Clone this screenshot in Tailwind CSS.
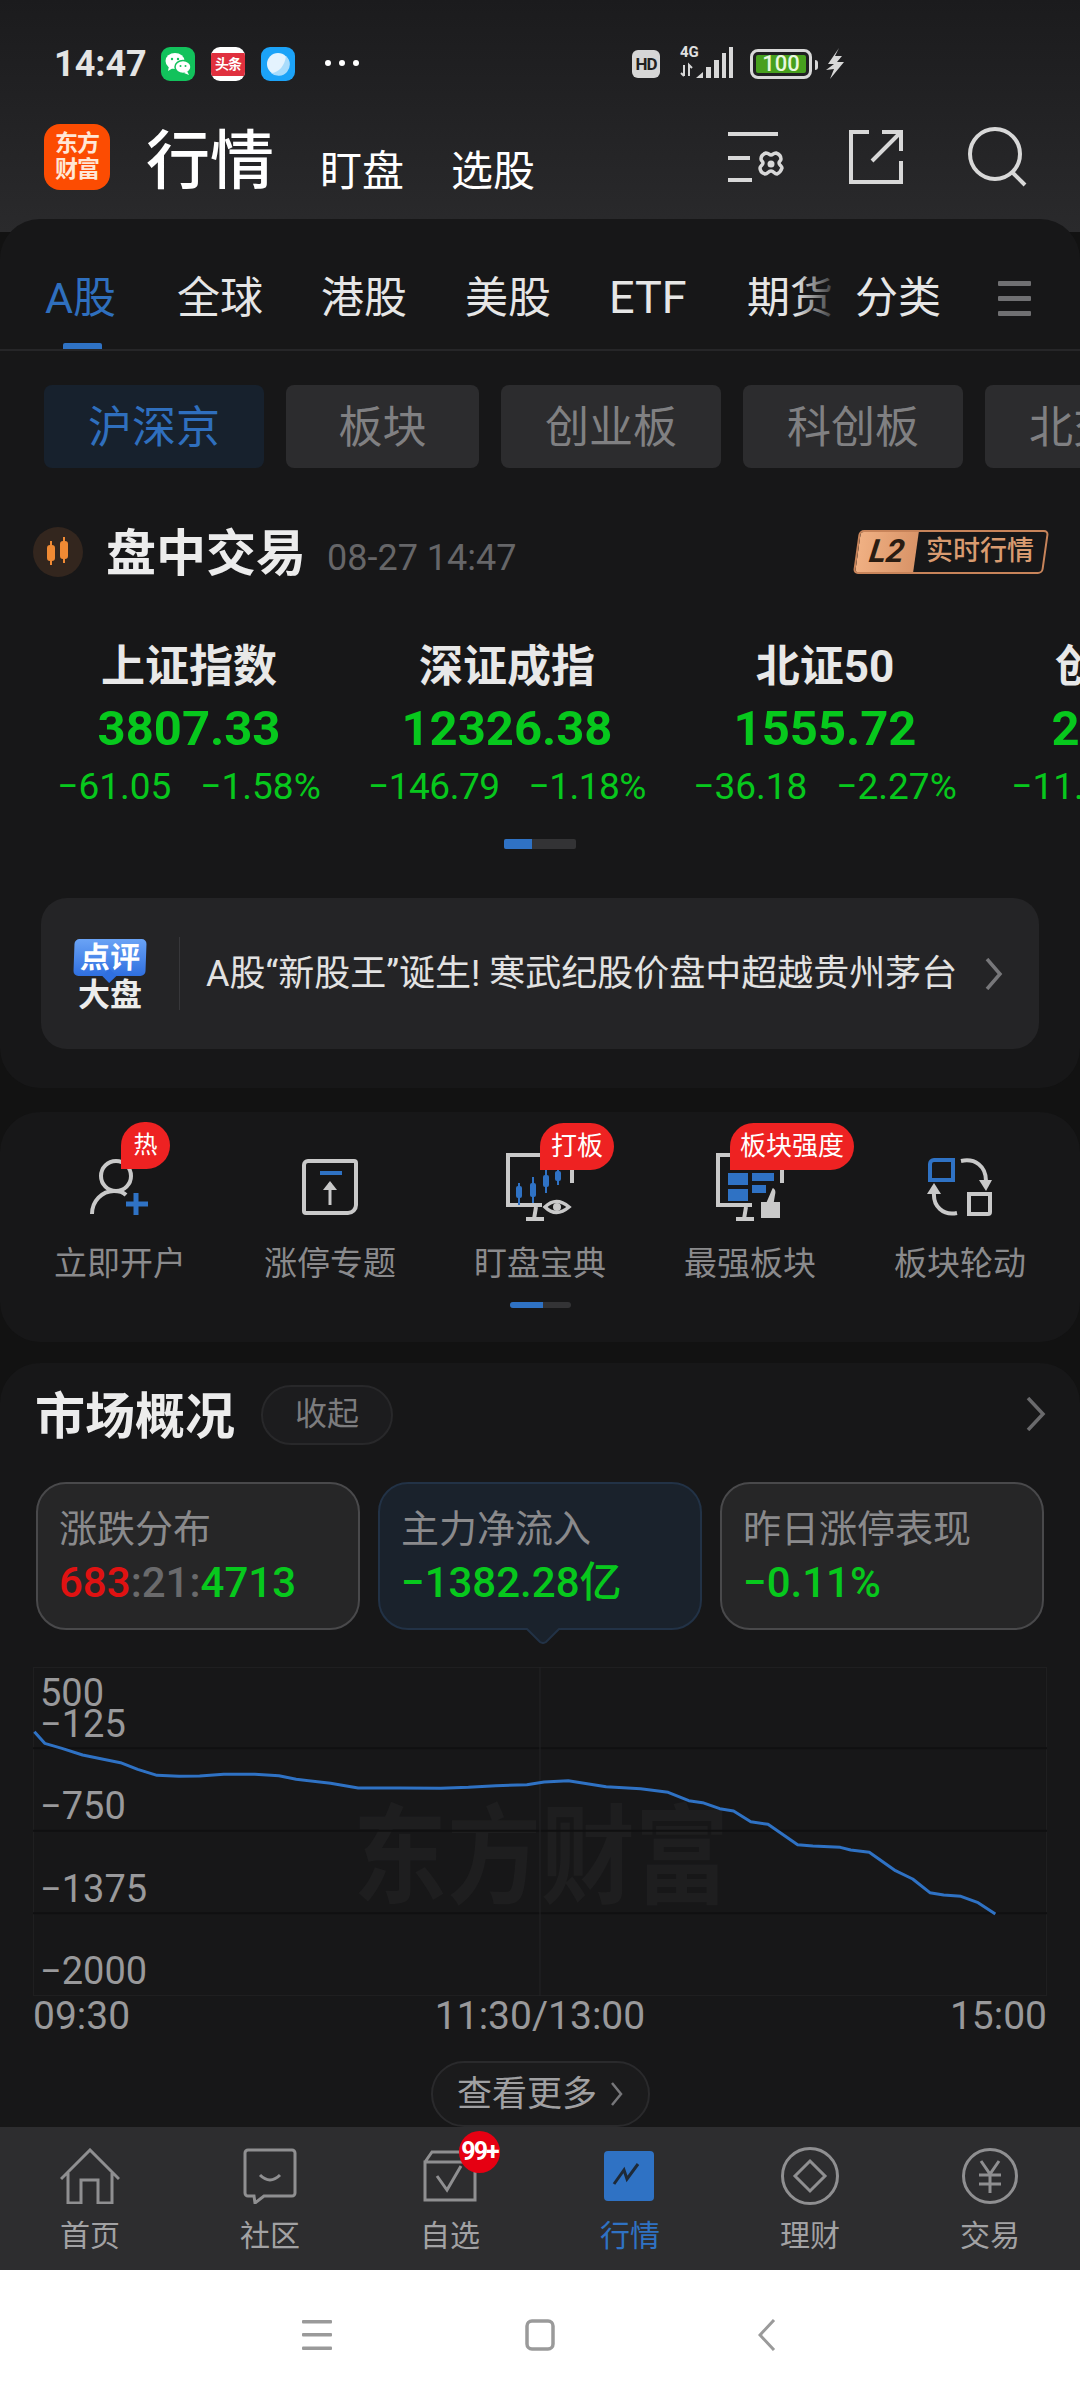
<!DOCTYPE html>
<html lang="zh-CN">
<head>
  <meta charset="UTF-8">
  <meta name="viewport" content="width=device-width, initial-scale=1.0">
  <title>行情</title>
  <script src="https://cdn.jsdelivr.net/npm/@tailwindcss/browser@4"></script>
</head>
<body class="bg-white font-['Roboto','Noto_Sans_CJK_SC',sans-serif]">
  <div class="w-[1080px] h-[2400px] flex flex-col overflow-hidden bg-[#121212]">

    <!-- Status bar + header -->
    <div class="h-[232px] -mb-[13px] shrink-0 bg-gradient-to-b from-[#1b1b1d] to-[#2a2a2c]">
      <div class="h-[94px] pt-[45px] pl-[54px] flex items-start">
        <span class="w-[93px] text-[36px] leading-[36px] font-bold text-[#e4e4e4] mt-[1px]">14:47</span>
        <div class="ml-[14px] mt-[2px] w-[34px] h-[34px] rounded-[9px] bg-[#12c25c] flex items-center justify-center">
          <svg width="28" height="26" viewBox="0 0 28 26"><ellipse cx="11" cy="10" rx="9.5" ry="8" fill="#fff"/><path d="M5 15l-1 5 5-3z" fill="#fff"/><ellipse cx="19" cy="16" rx="8" ry="6.5" fill="#fff" stroke="#12c25c" stroke-width="1.5"/><path d="M23 20l2 4-5-2z" fill="#fff"/><circle cx="8" cy="8" r="1.2" fill="#12c25c"/><circle cx="14" cy="8" r="1.2" fill="#12c25c"/><circle cx="16.5" cy="15" r="1" fill="#12c25c"/><circle cx="21.5" cy="15" r="1" fill="#12c25c"/></svg>
        </div>
        <div class="ml-[16px] mt-[2px] w-[34px] h-[34px] rounded-[9px] bg-white flex items-center overflow-hidden">
          <span class="w-full h-[23px] bg-[#e0303e] text-white text-[14px] leading-[23px] font-bold text-center tracking-[-1px]">头条</span>
        </div>
        <div class="ml-[16px] mt-[2px] w-[34px] h-[34px] rounded-[9px] bg-[#1ca3f8] flex items-center justify-center">
          <svg width="26" height="26" viewBox="0 0 26 26"><circle cx="13" cy="13" r="11" fill="#e4f3fe"/><path d="M21 5A11 11 0 0 1 6 22 C14 22 20 14 21 5z" fill="#a9dcfc"/></svg>
        </div>
        <div class="ml-[30px] mt-[15px] flex gap-[8px]">
          <span class="w-[6px] h-[6px] rounded-full bg-white"></span>
          <span class="w-[6px] h-[6px] rounded-full bg-white"></span>
          <span class="w-[6px] h-[6px] rounded-full bg-white"></span>
        </div>
        <div class="ml-[273px] mt-[5px] w-[28px] h-[28px] rounded-[6px] bg-[#d6d6d6] flex items-center justify-center text-[17px] leading-none font-bold text-[#222] tracking-[-1px]">HD</div>
        <div class="ml-[19px] mt-[2px] w-[55px] h-[31px] relative">
          <span class="absolute left-[1px] -top-[2px] text-[15px] leading-[15px] font-bold text-[#e0e0e0]">4G</span>
          <svg class="absolute left-0 top-0" width="55" height="31" viewBox="0 0 55 31" fill="#d8d8d8"><path d="M5 18v11M2 26l3 3M10 29V18l3 3" stroke="#d8d8d8" stroke-width="2" fill="none"/><path d="M17 31l7-6v6z"/><rect x="27" y="20" width="5" height="11"/><rect x="35" y="13" width="5" height="18"/><rect x="43" y="6" width="4" height="25"/><rect x="50" y="0" width="4" height="31"/></svg>
        </div>
        <div class="ml-[16px] mt-[4px] w-[62px] h-[30px] rounded-[8px] border-[3px] border-[#d8d8d8] p-[3px]">
          <div class="w-full h-full rounded-[2px] bg-[#47a01e] text-[22px] leading-[18px] font-medium text-[#e8f7de] text-center">100</div>
        </div>
        <span class="ml-[3px] mt-[15px] w-[3px] h-[10px] rounded-r bg-[#d8d8d8]"></span>
        <svg class="ml-[8px] mt-[3px]" width="18" height="31" viewBox="0 0 18 31" fill="#d8d8d8"><path d="M13 0L2 16h6L0 22l8-1-4 10 14-17h-7l5-6H9z"/></svg>
      </div>
      <div class="flex items-start pl-[44px]">
        <div class="mt-[30px] w-[66px] h-[66px] rounded-[16px] bg-[#fc4c02] text-[#ffe7d6] text-[23px] leading-[26px] font-bold text-center pt-[7px] tracking-[-1px]">东方<br>财富</div>
        <span class="ml-[36px] mt-[30px] text-[64px] leading-[76px] font-medium text-white">行情</span>
        <span class="ml-[46px] mt-[50px] text-[42px] leading-[56px] text-white">盯盘</span>
        <span class="ml-[47px] mt-[50px] text-[42px] leading-[56px] text-white">选股</span>
        <svg class="ml-[193px] mt-[37px]" width="58" height="52" viewBox="0 0 58 52" fill="none" stroke="#d8d8d8" stroke-width="4"><path d="M0 3h50M0 27h22M0 49h24"/><path d="M38 22c3 0 3 2 5 2s2-2 5-2c3 1 5 3 5 6 0 2-2 2-2 4s3 3 3 5c-1 3-3 5-5 6-3 0-3-3-6-3s-3 3-6 3c-3-1-5-3-5-6 0-2 3-3 3-5s-2-2-2-4c0-3 2-5 5-6z" stroke-width="3.5" stroke-linejoin="round"/><circle cx="43" cy="33" r="3.5" fill="#d8d8d8" stroke="none"/></svg>
        <svg class="ml-[63px] mt-[36px]" width="54" height="54" viewBox="0 0 54 54" fill="none" stroke="#d8d8d8" stroke-width="4"><path d="M20 2H2v50h50V31M33 2h19v19M52 2L23 31"/></svg>
        <svg class="ml-[65px] mt-[33px]" width="60" height="60" viewBox="0 0 60 60" fill="none" stroke="#d8d8d8" stroke-width="4"><circle cx="27" cy="27" r="25"/><path d="M44 45l13 13"/></svg>
      </div>
    </div>

    <!-- Main card -->
    <div class="relative h-[869px] shrink-0 rounded-[40px] bg-[#171718] overflow-hidden">
      <div class="relative h-[132px] border-b-[2px] border-[#262628] flex items-start pt-[49px] text-[43px] leading-[60px] text-[#e6e6e6]">
        <span class="absolute left-[45px] text-[#2f6fbe]">A股</span>
        <span class="absolute left-[177px]">全球</span>
        <span class="absolute left-[321px]">港股</span>
        <span class="absolute left-[465px]">美股</span>
        <span class="absolute left-[609px] text-[45px]">ETF</span>
        <span class="absolute left-[747px]">期货</span>
        <span class="absolute left-[795px] top-[40px] w-[46px] h-[70px] bg-gradient-to-r from-[#171718]/0 to-[#171718]"></span>
        <span class="absolute left-[855px]">分类</span>
        <svg class="absolute left-[998px] top-[62px]" width="34" height="36" viewBox="0 0 34 36" fill="#707072"><rect width="33" height="5" y="0" rx="1"/><rect width="33" height="5" y="15" rx="1"/><rect width="33" height="5" y="30" rx="1"/></svg>
        <span class="absolute left-[63px] bottom-0 w-[39px] h-[6px] rounded-t-[2px] bg-[#2f72c4]"></span>
      </div>
      <div class="mt-[34px] pl-[44px] flex gap-[22px] h-[83px] text-[44px] text-[#808082]">
        <div class="w-[220px] shrink-0 rounded-[8px] bg-[#17212d] text-[#2f6fbe] flex items-center justify-center pt-[2px]">沪深京</div>
        <div class="w-[193px] shrink-0 rounded-[8px] bg-[#2c2c2e] flex items-center justify-center pt-[2px]">板块</div>
        <div class="w-[220px] shrink-0 rounded-[8px] bg-[#2c2c2e] flex items-center justify-center pt-[2px]">创业板</div>
        <div class="w-[220px] shrink-0 rounded-[8px] bg-[#2c2c2e] flex items-center justify-center pt-[2px]">科创板</div>
        <div class="w-[220px] shrink-0 rounded-[8px] bg-[#2c2c2e] pl-[44px] pt-[2px] flex items-center">北交所</div>
      </div>
      <div class="mt-[59px] h-[50px] pl-[33px] pr-[34px] flex items-center">
        <div class="w-[50px] h-[50px] rounded-full bg-[#33261e] flex items-center justify-center">
          <svg width="28" height="32" viewBox="0 0 28 32" fill="#f08a34" stroke="#f08a34" stroke-width="2"><path d="M7 5v24M20 1v26"/><rect x="4" y="10" width="6" height="14" rx="2"/><rect x="17" y="6" width="6" height="16" rx="2"/></svg>
        </div>
        <span class="ml-[23px] mt-[4px] text-[50px] leading-[60px] font-bold text-[#ececec]">盘中交易</span>
        <span class="ml-[21px] mt-[12px] text-[36px] text-[#666668]">08-27 14:47</span>
        <div class="ml-auto w-[190px] h-[44px] -skew-x-[8deg] rounded-[5px] border-[2px] border-[#c8845a] flex overflow-hidden">
          <span class="w-[58px] bg-gradient-to-r from-[#f0b083] to-[#d99468] text-[#2a1c12] text-[32px] leading-[38px] font-bold italic text-center">L2</span>
          <span class="flex-1 text-[27px] leading-[38px] font-medium text-[#d99b70] text-center skew-x-[8deg]">实时行情</span>
        </div>
      </div>
      <div class="mt-[59px] pl-[30px] flex">
        <div class="w-[318px] shrink-0 flex flex-col items-center">
          <span class="text-[44px] leading-[62px] font-bold text-[#e8e8e8]">上证指数</span>
          <span class="text-[49px] leading-[62px] font-bold text-[#07c81d]">3807.33</span>
          <div class="flex gap-[29px] text-[37px] leading-[54px] text-[#07c81d]"><span>−61.05</span><span>−1.58%</span></div>
        </div>
        <div class="w-[318px] shrink-0 flex flex-col items-center">
          <span class="text-[44px] leading-[62px] font-bold text-[#e8e8e8]">深证成指</span>
          <span class="text-[49px] leading-[62px] font-bold text-[#07c81d]">12326.38</span>
          <div class="flex gap-[29px] text-[37px] leading-[54px] text-[#07c81d] tracking-[-0.5px]"><span>−146.79</span><span>−1.18%</span></div>
        </div>
        <div class="w-[318px] shrink-0 flex flex-col items-center">
          <span class="text-[44px] leading-[62px] font-bold text-[#e8e8e8]">北证50</span>
          <span class="text-[49px] leading-[62px] font-bold text-[#07c81d]">1555.72</span>
          <div class="flex gap-[29px] text-[37px] leading-[54px] text-[#07c81d]"><span>−36.18</span><span>−2.27%</span></div>
        </div>
        <div class="w-[318px] shrink-0 flex flex-col items-center">
          <span class="text-[44px] leading-[62px] font-bold text-[#e8e8e8]">创业板指</span>
          <span class="text-[49px] leading-[62px] font-bold text-[#07c81d]">2654.18</span>
          <div class="flex gap-[29px] text-[37px] leading-[54px] text-[#07c81d]"><span>−11.56</span><span>−0.44%</span></div>
        </div>
      </div>
      <div class="mt-[25px] mx-auto w-[72px] h-[10px] rounded-[2px] bg-[#333335] overflow-hidden">
        <div class="w-[28px] h-full bg-[#2f72c4]"></div>
      </div>
      <div class="ml-[41px] mt-[49px] w-[998px] h-[151px] rounded-[26px] bg-[#242426] flex items-center">
        <div class="ml-[32px] mt-[5px] w-[74px] flex flex-col items-center">
          <div class="relative w-[72px] h-[37px] rounded-[5px] -skew-x-[2deg] bg-gradient-to-b from-[#6aa3f5] to-[#2f6fe0] text-white text-[30px] leading-[37px] font-bold text-center">点评
            <span class="absolute left-[31px] -bottom-[5px] w-[10px] h-[10px] rotate-45 bg-[#2f6fe0]"></span>
          </div>
          <span class="text-[32px] leading-[38px] font-bold text-[#ececec]">大盘</span>
        </div>
        <span class="ml-[32px] w-[1px] h-[73px] bg-[#37373a]"></span>
        <span class="ml-[26px] text-[36px] text-[#e2e2e2] whitespace-nowrap">A股“新股王”诞生! 寒武纪股价盘中超越贵州茅台</span>
        <svg class="ml-[28px]" width="18" height="32" viewBox="0 0 18 32" fill="none" stroke="#77777a" stroke-width="3.5"><path d="M2 1l13 15L2 31"/></svg>
      </div>
    </div>

    <!-- Shortcuts -->
    <div class="mt-[24px] h-[230px] shrink-0 rounded-[40px] bg-[#171718]">
      <div class="grid grid-cols-5 px-[15px] pt-[40px]">
        <div class="flex flex-col items-center">
          <div class="relative w-[70px] h-[70px] flex items-center justify-center">
            <svg width="60" height="56" viewBox="0 0 60 56" fill="none" stroke="#c9c9c9" stroke-width="4"><ellipse cx="26" cy="17" rx="15" ry="15"/><path d="M2 55c0-13 10-23 22-23 5 0 9 1 12 4"/><path d="M46 34v22M36 45h22" stroke="#2f72c4" stroke-width="5"/></svg>
            <span class="absolute left-[36px] -top-[30px] w-[49px] h-[47px] rounded-[24px] rounded-bl-none bg-[#ee2222] text-white text-[24px] leading-[47px] text-center">热</span>
          </div>
          <span class="mt-[17px] text-[33px] leading-[50px] text-[#8a8a8c]">立即开户</span>
        </div>
        <div class="flex flex-col items-center">
          <div class="w-[70px] h-[70px] flex items-center justify-center">
            <svg width="56" height="56" viewBox="0 0 56 56" fill="none" stroke="#c9c9c9" stroke-width="4"><path d="M6 2h46a2 2 0 0 1 2 2v42a8 8 0 0 1-8 8H4a2 2 0 0 1-2-2V6a4 4 0 0 1 4-4z"/><path d="M18 14h22" stroke="#2f72c4" stroke-width="4"/><path d="M28 46V24" stroke-width="3"/><path d="M21 31l7-9 7 9z" fill="#c9c9c9" stroke="none"/></svg>
          </div>
          <span class="mt-[17px] text-[33px] leading-[50px] text-[#8a8a8c]">涨停专题</span>
        </div>
        <div class="flex flex-col items-center">
          <div class="relative w-[70px] h-[70px] flex items-center justify-center">
            <svg width="68" height="68" viewBox="0 0 68 68" fill="none" stroke="#c9c9c9" stroke-width="4"><path d="M66 30V2H2v50h34M20 66h18M30 54l-2 12"/><path d="M13 30v22M27 24v26M40 16v24M52 14v18" stroke="#2f72c4" stroke-width="2"/><rect x="10" y="33" width="6" height="12" rx="2" fill="#2f72c4" stroke="none"/><rect x="24" y="30" width="6" height="14" rx="2" fill="#2f72c4" stroke="none"/><rect x="37" y="22" width="6" height="12" rx="2" fill="#2f72c4" stroke="none"/><rect x="49" y="18" width="6" height="10" rx="2" fill="#2f72c4" stroke="none"/><path d="M39 54q11-11 24 0q-13 11-24 0z" stroke-width="3.5"/><circle cx="51" cy="54" r="4" fill="#c9c9c9" stroke="none"/></svg>
            <span class="absolute left-[35px] -top-[29px] w-[74px] h-[47px] rounded-[24px] rounded-bl-none bg-[#ee2222] text-white text-[26px] leading-[47px] text-center">打板</span>
          </div>
          <span class="mt-[17px] text-[33px] leading-[50px] text-[#8a8a8c]">盯盘宝典</span>
        </div>
        <div class="flex flex-col items-center">
          <div class="relative w-[70px] h-[70px] flex items-center justify-center">
            <svg width="68" height="68" viewBox="0 0 68 68" fill="none" stroke="#c9c9c9" stroke-width="4"><path d="M66 30V2H2v50h34M20 66h18M30 54l-2 12"/><rect x="12" y="20" width="20" height="12" fill="#2f72c4" stroke="none"/><rect x="36" y="20" width="22" height="8" fill="#2f72c4" stroke="none"/><rect x="12" y="36" width="20" height="12" fill="#2f72c4" stroke="none"/><rect x="36" y="32" width="14" height="8" fill="#2f72c4" stroke="none"/><path d="M44 66V48h6l6-14c4 0 5 4 4 8l-1 6h6v18z" fill="#c9c9c9" stroke="#171718" stroke-width="2"/></svg>
            <span class="absolute left-[15px] -top-[29px] w-[124px] h-[47px] rounded-[24px] rounded-bl-none bg-[#ee2222] text-white text-[26px] leading-[47px] text-center">板块强度</span>
          </div>
          <span class="mt-[17px] text-[33px] leading-[50px] text-[#8a8a8c]">最强板块</span>
        </div>
        <div class="flex flex-col items-center">
          <div class="w-[70px] h-[70px] flex items-center justify-center">
            <svg width="66" height="58" viewBox="0 0 66 58" fill="none" stroke="#c9c9c9" stroke-width="4"><path d="M3 6a4 4 0 0 1 4-4h19v20H3z" stroke="#2f72c4" stroke-width="4"/><path d="M63 36v18a2 2 0 0 1-2 2H42V36z"/><path d="M34 3c14-3 25 5 25 20"/><path d="M52 22h13l-6 11z" fill="#c9c9c9" stroke="none"/><path d="M30 55C16 58 6 48 7 35"/><path d="M0 36l7-11 7 11z" fill="#c9c9c9" stroke="none"/></svg>
          </div>
          <span class="mt-[17px] text-[33px] leading-[50px] text-[#8a8a8c]">板块轮动</span>
        </div>
      </div>
      <div class="mt-[13px] mx-auto w-[61px] h-[6px] rounded-[3px] bg-[#333335] overflow-hidden">
        <div class="w-[33px] h-full bg-[#2f72c4]"></div>
      </div>
    </div>

    <!-- Market overview -->
    <div class="mt-[21px] flex-1 rounded-t-[40px] bg-[#171718] overflow-hidden flex flex-col relative">
      <div class="h-[119px] pl-[35px] pr-[34px] pt-[22px] flex items-start">
        <span class="mt-[4px] text-[50px] leading-[56px] font-bold text-[#ececec]">市场概况</span>
        <span class="ml-[26px] w-[132px] h-[60px] rounded-full bg-[#1c1c1e] border-[2px] border-[#28282a] text-[32px] leading-[54px] text-[#7c7c7e] text-center">收起</span>
        <svg class="ml-auto mt-[12px]" width="20" height="34" viewBox="0 0 20 34" fill="none" stroke="#6a6a6c" stroke-width="3.5"><path d="M2 1l15 16L2 33"/></svg>
      </div>
      <div class="pl-[36px] flex gap-[18px]">
        <div class="w-[324px] h-[148px] rounded-[30px] bg-[#262627] border-[2px] border-[#49494b] pl-[21px] pt-[20px]">
          <p class="text-[38px] leading-[50px] text-[#8a8a8c]">涨跌分布</p>
          <p class="text-[42px] leading-[58px] font-medium text-[#07c81d]"><span class="text-[#e01212]">683</span><span class="text-[#6a6a6c]">:21:</span>4713</p>
        </div>
        <div class="relative w-[324px] h-[148px] rounded-[30px] bg-[#1a222c] border-[2px] border-[#223246] pl-[21px] pt-[20px]">
          <p class="text-[38px] leading-[50px] text-[#8a8a8c]">主力净流入</p>
          <p class="text-[42px] leading-[58px] font-medium text-[#07c81d]">−1382.28亿</p>
          <svg class="absolute left-[145px] -bottom-[16px]" width="36" height="16" viewBox="0 0 36 16" fill="#1a222c" stroke="#223246" stroke-width="2"><path d="M1 0l14 14q3 2 6 0L35 0"/></svg>
        </div>
        <div class="w-[324px] h-[148px] rounded-[30px] bg-[#262627] border-[2px] border-[#49494b] pl-[21px] pt-[20px]">
          <p class="text-[38px] leading-[50px] text-[#8a8a8c]">昨日涨停表现</p>
          <p class="text-[42px] leading-[58px] font-medium text-[#07c81d]">−0.11%</p>
        </div>
      </div>
      <div class="relative ml-[33px] mt-[37px] w-[1014px] h-[329px] text-[38px] leading-[40px] text-[#99999b]">
        <span class="absolute left-[320px] top-[136px] w-[375px] text-[94px] leading-[110px] font-bold text-[#1e1e1f] whitespace-nowrap scale-y-[1.15]">东方财富</span>
        <svg class="absolute inset-0" width="1014" height="329" viewBox="48 81 1472 987" preserveAspectRatio="none" fill="none">
          <rect x="48" y="81" width="1472" height="987" stroke="#1f1f20" stroke-width="2" vector-effect="non-scaling-stroke"/>
          <path d="M48 325H1520M48 572H1520M48 820H1520" stroke="#101011" stroke-width="2" vector-effect="non-scaling-stroke"/>
          <path d="M784 81V1068" stroke="#242426" stroke-width="1" vector-effect="non-scaling-stroke"/>
          <polyline stroke="#2f72c4" stroke-width="3" stroke-linejoin="round" vector-effect="non-scaling-stroke" points="50,275 65,310 90,325 120,345 150,358 175,368 200,388 228,406 260,409 290,408 325,403 370,403 405,407 430,418 480,430 520,444 580,444 640,445 680,442 720,437 765,434 790,426 825,422 880,440 930,446 970,457 1000,482 1020,488 1045,506 1065,513 1090,545 1115,553 1158,614 1180,618 1220,622 1235,630 1262,637 1300,692 1325,717 1350,758 1370,765 1395,769 1420,788 1445,822"/>
        </svg>
        <span class="absolute left-[7px] top-[6px]">500</span>
        <span class="absolute left-[7px] top-[37px]">−125</span>
        <span class="absolute left-[7px] top-[119px]">−750</span>
        <span class="absolute left-[7px] top-[202px]">−1375</span>
        <span class="absolute left-[7px] top-[284px]">−2000</span>
      </div>
      <div class="mx-[33px] h-[38px] mt-[3px] flex justify-between text-[39px] leading-[38px] text-[#99999b]">
        <span>09:30</span><span>11:30/13:00</span><span>15:00</span>
      </div>
      <div class="mt-[26px] mx-auto w-[219px] h-[66px] rounded-full bg-[#1b1b1c] border-[2px] border-[#2a2a2c] flex items-center justify-center gap-[14px] text-[35px] text-[#a0a0a2]">
        <span class="mt-[3px]">查看更多</span>
        <svg width="12" height="24" viewBox="0 0 12 24" fill="none" stroke="#77777a" stroke-width="2.5"><path d="M1 1l9 11-9 11"/></svg>
      </div>
    </div>

    <!-- Bottom nav -->
    <div class="h-[143px] shrink-0 bg-[#2d2d2f] grid grid-cols-6 text-[30px] leading-[40px] text-[#a2a2a4]">
      <div class="flex flex-col items-center pt-[17px]">
        <div class="w-[64px] h-[64px] flex items-center justify-center"><svg width="60" height="56" viewBox="0 0 60 56" fill="none" stroke="#8f8f91" stroke-width="3"><path d="M1 31L30 2l29 29M8 25v30h13V32h17v23h14V25"/></svg></div>
        <span class="mt-[8px]">首页</span>
      </div>
      <div class="flex flex-col items-center pt-[17px]">
        <div class="w-[64px] h-[64px] flex items-center justify-center"><svg width="54" height="56" viewBox="0 0 54 56" fill="none" stroke="#8f8f91" stroke-width="3"><path d="M5 2h44a3 3 0 0 1 3 3v40a3 3 0 0 1-3 3H21l-9 7-1-7H5a3 3 0 0 1-3-3V5a3 3 0 0 1 3-3z"/><path d="M17 27q10 10 20 0"/></svg></div>
        <span class="mt-[8px]">社区</span>
      </div>
      <div class="relative flex flex-col items-center pt-[17px]">
        <div class="w-[64px] h-[64px] flex items-center justify-center"><svg width="54" height="52" viewBox="0 0 54 52" fill="none" stroke="#8f8f91" stroke-width="3"><path d="M2 12h50v38H2zM2 12l7-10h30"/><path d="M14 26l10 14 14-24"/></svg></div>
        <span class="absolute left-[99px] top-[4px] w-[41px] h-[42px] rounded-full bg-[#e60012] text-white text-[25px] leading-[42px] font-bold text-center tracking-[-2px]">99+</span>
        <span class="mt-[8px]">自选</span>
      </div>
      <div class="flex flex-col items-center pt-[17px]">
        <div class="w-[64px] h-[64px] flex items-center justify-center"><svg width="52" height="50" viewBox="0 0 52 50"><rect width="50" height="50" rx="4" fill="#2f72c4"/><path d="M10 33l10-14 3 9 11-15" fill="none" stroke="#1e2a38" stroke-width="3"/></svg></div>
        <span class="mt-[8px] text-[#2f72c4]">行情</span>
      </div>
      <div class="flex flex-col items-center pt-[17px]">
        <div class="w-[64px] h-[64px] flex items-center justify-center"><svg width="58" height="58" viewBox="0 0 58 58" fill="none" stroke="#8f8f91" stroke-width="3"><circle cx="29" cy="29" r="27.5"/><path d="M29 14l15 15-15 15-15-15z"/></svg></div>
        <span class="mt-[8px]">理财</span>
      </div>
      <div class="flex flex-col items-center pt-[17px]">
        <div class="w-[64px] h-[64px] flex items-center justify-center"><svg width="56" height="58" viewBox="0 0 56 58" fill="none" stroke="#8f8f91" stroke-width="3"><circle cx="28" cy="29" r="26.5"/><path d="M19 14l9 13 9-13M17 28h22M17 37h22M28 27v19"/></svg></div>
        <span class="mt-[8px]">交易</span>
      </div>
    </div>

    <!-- System nav -->
    <div class="h-[130px] shrink-0 bg-white relative flex items-center">
      <svg class="ml-[302px]" width="30" height="30" viewBox="0 0 30 30" fill="#9a9a9a"><rect width="30" height="3.5" rx="1"/><rect y="13" width="30" height="3.5" rx="1"/><rect y="26.5" width="30" height="3.5" rx="1"/></svg>
      <svg class="ml-[193px]" width="30" height="32" viewBox="0 0 30 32" fill="none" stroke="#9a9a9a" stroke-width="3.5"><rect x="2" y="2" width="26" height="28" rx="5"/></svg>
      <svg class="ml-[203px]" width="18" height="32" viewBox="0 0 18 32" fill="none" stroke="#9a9a9a" stroke-width="3"><path d="M16 1L2 16l14 15"/></svg>
    </div>
  </div>
</body>
</html>
